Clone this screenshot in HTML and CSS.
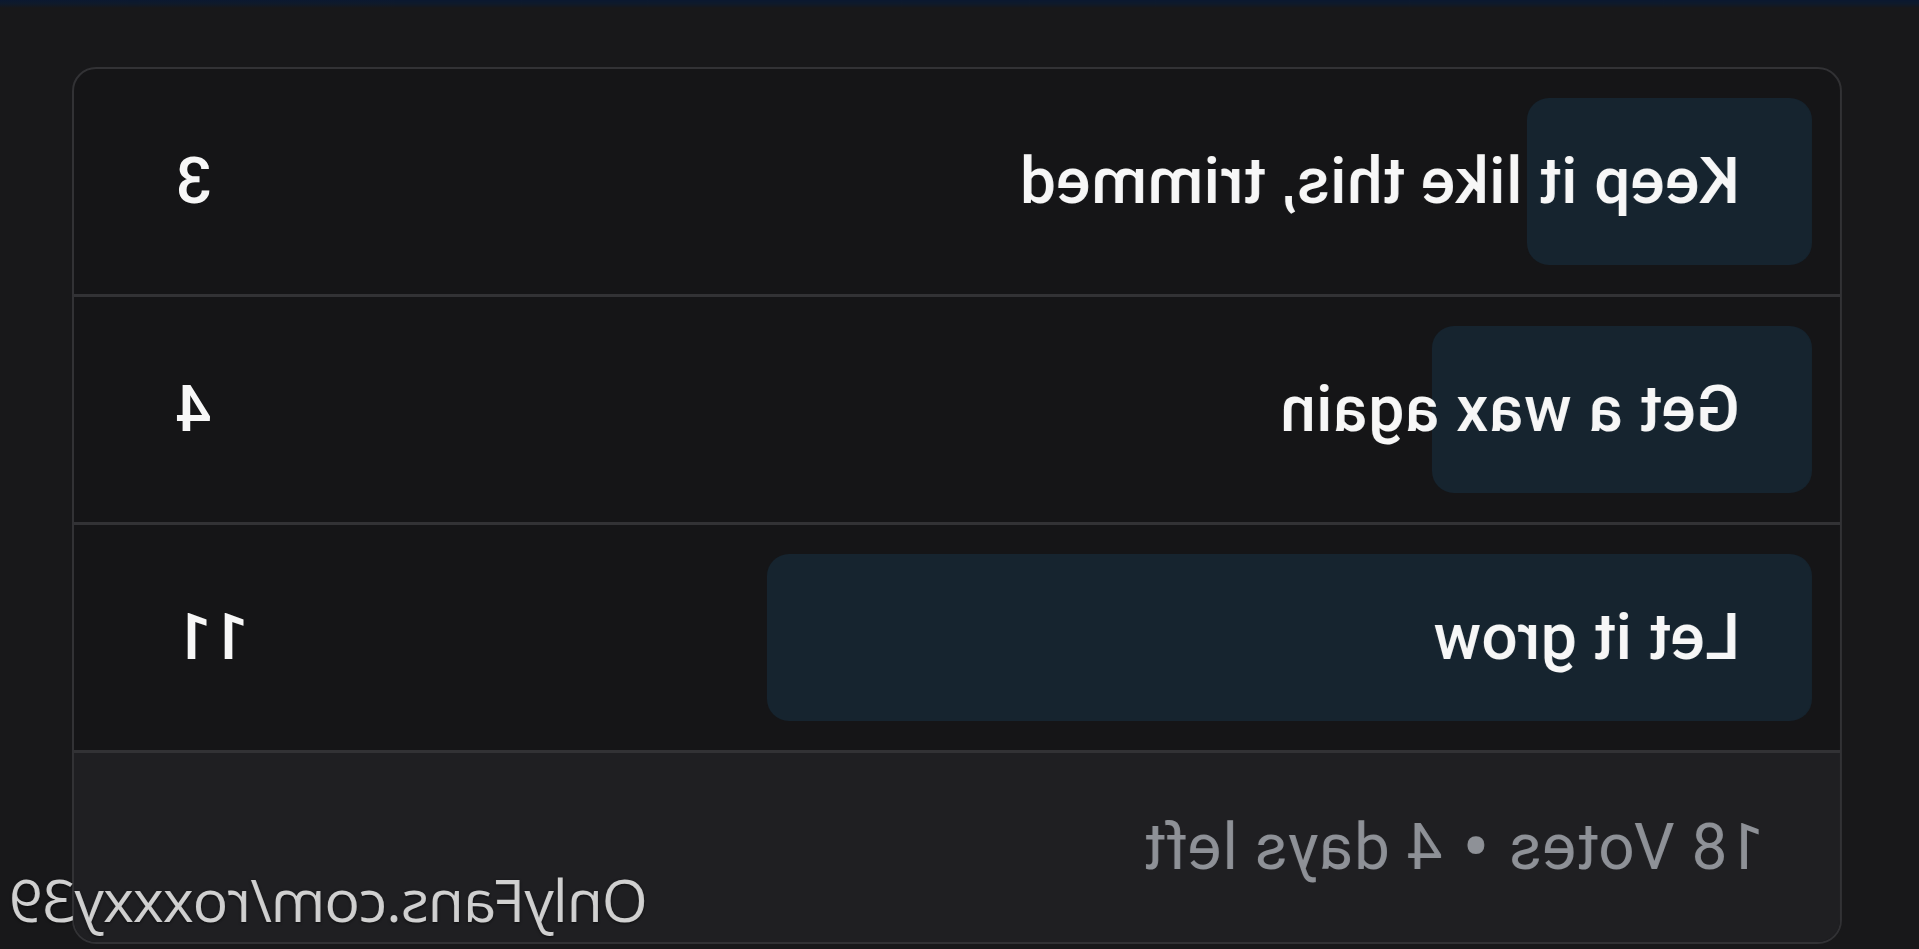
FILE: index.html
```html
<!DOCTYPE html>
<html lang="en">
<head>
  <meta charset="UTF-8">
  <meta name="viewport" content="width=device-width, initial-scale=1.0">
  <title>Poll</title>
  <link rel="stylesheet" href="styles.css">
</head>
<body>
  <!-- the capture is mirrored, so the whole page is flipped -->
  <div class="page">
    <div class="top-glow"></div>

    <div class="poll">
      <div class="option">
        <div class="track">
          <div class="fill" style="width: 16.667%"></div>
          <span class="label">Keep it like this, trimmed</span>
          <span class="count">3</span>
        </div>
      </div>

      <div class="option">
        <div class="track">
          <div class="fill" style="width: 22.222%"></div>
          <span class="label">Get a wax again</span>
          <span class="count">4</span>
        </div>
      </div>

      <div class="option">
        <div class="track">
          <div class="fill" style="width: 61.111%"></div>
          <span class="label">Let it grow</span>
          <span class="count">11</span>
        </div>
      </div>

      <div class="poll-footer">18 Votes <span class="dot">&bull;</span> 4 days left</div>
    </div>

    <div class="watermark">OnlyFans.com/roxxxy39</div>
  </div>
</body>
</html>
```

FILE: styles.css
```css
:root {
  --bg: #18181a;
  --card: #151517;
  --footer: #1f1f22;
  --line: #323235;
  --bar: #16242f;
  --text: #f7f7f7;
  --muted: #8e9197;
}

* {
  margin: 0;
  padding: 0;
  box-sizing: border-box;
}

body {
  background: var(--bg);
  font-family: Roboto, 'Liberation Sans', sans-serif;
  overflow: hidden;
}

.page {
  width: 1919px;
  height: 949px;
  position: relative;
  transform: scaleX(-1);
  padding: 67px 72px 0 77px;
}

.top-glow {
  position: absolute;
  top: 0;
  left: 0;
  right: 0;
  height: 8px;
  background: linear-gradient(180deg, #0b1830 0%, #0f1a2a 50%, var(--bg) 100%);
}

.poll {
  background: var(--card);
  border: 2px solid var(--line);
  border-radius: 24px;
  overflow: hidden;
}

.option {
  padding: 29px 28px;
}

.option + .option,
.poll-footer {
  border-top: 3px solid var(--line);
}

.track {
  position: relative;
  height: 167px;
  display: flex;
  align-items: center;
  justify-content: space-between;
  padding: 0 73px 0 72px;
  font-size: 64px;
  font-weight: 500;
  letter-spacing: 0.5px;
  color: var(--text);
}

.fill {
  position: absolute;
  top: 0;
  left: 0;
  bottom: 0;
  background: var(--bar);
  border-radius: 22px;
}

.label,
.count {
  position: relative;
}

.poll-footer {
  background: var(--footer);
  height: 192px;
  display: flex;
  align-items: center;
  padding-left: 76px;
  font-size: 64px;
  letter-spacing: 0.5px;
  white-space: pre;
  color: var(--muted);
}

.dot {
  margin: 0 2px;
  font-size: 84px;
  line-height: 1;
}

.watermark {
  position: absolute;
  right: 10px;
  bottom: 10px;
  font-family: 'Open Sans', sans-serif;
  font-weight: 400;
  font-size: 59px;
  letter-spacing: -1px;
  color: #d0d0d0;
  text-shadow: 0 1px 3px rgba(0, 0, 0, 0.6);
}
```
